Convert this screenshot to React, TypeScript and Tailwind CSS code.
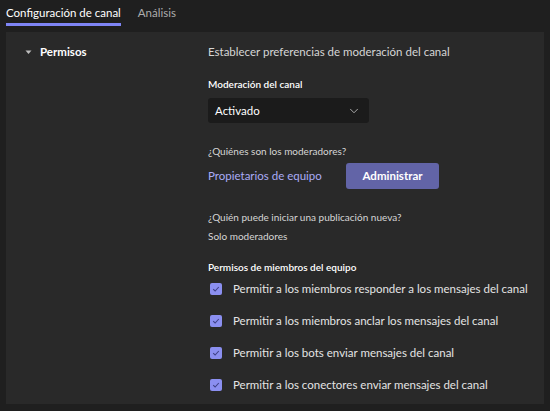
import { ChevronDown } from "lucide-react";

const memberPerms = [
  "Permitir a los miembros responder a los mensajes del canal",
  "Permitir a los miembros anclar los mensajes del canal",
  "Permitir a los bots enviar mensajes del canal",
  "Permitir a los conectores enviar mensajes del canal",
];

function Check({ label }: { label: string }) {
  return (
    <div className="flex h-5 items-center">
      <span className="ml-[2px] flex h-[12px] w-[12px] shrink-0 items-center justify-center rounded-[2px] bg-[#8b8ff0]">
        <svg width="8" height="8" viewBox="0 0 8 8" fill="none">
          <path d="M1.2 4.2 3.1 6 6.8 2" stroke="#3f4185" strokeWidth="1.1" />
        </svg>
      </span>
      <span className="ml-[11px] whitespace-nowrap text-[11.5px] text-[#e4e4e4]">{label}</span>
    </div>
  );
}

export default function App() {
  return (
    <div className="h-[411px] w-[550px] bg-[#1f1f1f] font-['Lato',sans-serif] text-[#d6d6d6]">
      <div className="flex h-[32px] items-start gap-[17px] px-[6px] pt-[4px]">
        <div className="flex flex-col">
          <span className="text-[11.5px] leading-[18px] text-white">Configuración de canal</span>
          <span className="mt-[1px] h-[3px] w-full bg-[#7f85f5]" />
        </div>
        <span className="text-[11.5px] leading-[18px] text-[#adadad]">Análisis</span>
      </div>

      <div className="mx-[6px] flex h-[372px] bg-[#292929] pt-[10px]">
        <div className="flex h-5 w-[202px] shrink-0 items-center pl-[19px]">
          <svg width="7" height="5" viewBox="0 0 7 5" className="mt-[1px]">
            <path d="M0.5 0.5h6L3.5 4z" fill="#bdbdbd" />
          </svg>
          <span className="ml-[8px] text-[11.5px] font-bold text-white">Permisos</span>
        </div>

        <div className="flex flex-col">
          <p className="h-5 text-[11.5px] leading-5 text-[#d6d6d6]">
            Establecer preferencias de moderación del canal
          </p>

          <p className="mt-[14px] text-[10px] font-semibold leading-4 text-white">
            Moderación del canal
          </p>
          <div className="mt-[6px] flex h-[25px] w-[161px] items-center justify-between rounded-[3px] bg-[#1b1b1b] pl-[7px] pr-[8px]">
            <span className="text-[11.5px] text-white">Activado</span>
            <ChevronDown size={14} strokeWidth={1.5} color="#bdbdbd" />
          </div>

          <p className="mt-[20px] text-[10px] leading-4 text-[#d6d6d6]">
            ¿Quiénes son los moderadores?
          </p>
          <div className="mt-[4px] flex h-[26px] items-center">
            <span className="w-[138px] text-[11.5px] text-[#a9acf6]">Propietarios de equipo</span>
            <button className="flex h-[26px] w-[93px] items-center justify-center rounded-[3px] bg-[#6264a7] text-[11.5px] font-bold text-white">
              Administrar
            </button>
          </div>

          <p className="mt-[20px] text-[10px] leading-4 text-[#d6d6d6]">
            ¿Quién puede iniciar una publicación nueva?
          </p>
          <p className="mt-[3px] text-[10px] leading-4 text-[#d6d6d6]">Solo moderadores</p>

          <p className="mt-[15px] text-[10px] font-semibold leading-4 text-white">
            Permisos de miembros del equipo
          </p>
          <div className="mt-[4px] flex flex-col gap-[12px]">
            {memberPerms.map((p) => (
              <Check key={p} label={p} />
            ))}
          </div>
        </div>
      </div>
    </div>
  );
}
